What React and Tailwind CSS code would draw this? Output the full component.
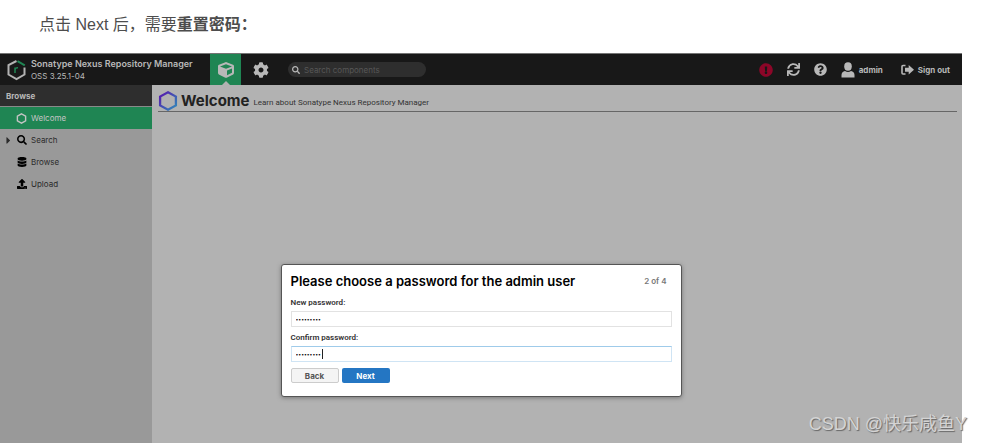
import React from 'react';
import {
  FaCaretRight,
  FaCog,
  FaCube,
  FaDatabase,
  FaExclamationCircle,
  FaQuestionCircle,
  FaSearch,
  FaSync,
  FaUpload,
} from 'react-icons/fa';

const menuItems = [
  { label: 'Search', icon: FaSearch, expandable: true },
  { label: 'Browse', icon: FaDatabase },
  { label: 'Upload', icon: FaUpload },
];

function Logo() {
  return (
    <svg className="w-5 h-[22px]" viewBox="0 0 20 22" fill="none" strokeWidth="2">
      <path d="M9.5 2 1.500 6.200v9.300L9.500 20l8-4.500V8.500" stroke="#b2b2b2" />
      <path d="M10.500 2.200 17.800 6.400" stroke="#1f8553" />
      <path d="M8 14V8.500M8 10.500c.3-1.300 1.300-2 3-1.800" stroke="#1f8553" strokeWidth="1.500" />
    </svg>
  );
}

function Hexagon() {
  return (
    <svg className="w-5 h-5" viewBox="0 0 20 20" fill="none">
      <defs>
        <linearGradient id="hexagon" x1="0" y1="0" x2="1" y2="1">
          <stop offset="0.1" stopColor="#5420ae" />
          <stop offset="0.9" stopColor="#3480b8" />
        </linearGradient>
      </defs>
      <path d="M10 1.300 17.900 5.600v8.800L10 18.700l-7.900-4.300V5.600z" stroke="url(#hexagon)" strokeWidth="2.300" />
    </svg>
  );
}

function UserIcon() {
  return (
    <svg className="w-[14px] h-4" viewBox="0 0 14 16" fill="currentColor">
      <ellipse cx="7" cy="4.500" rx="3.800" ry="4.200" />
      <path d="M.5 15.500v-2.500C.5 10.800 2 9.500 4 9c2 1.200 4 1.200 6 0 2 .5 3.500 1.800 3.500 4v2.500z" />
    </svg>
  );
}

function SignOutIcon() {
  return (
    <svg className="w-[13px] h-3" viewBox="0 0 13 12">
      <path d="M4.500 1.500H2a1 1 0 0 0-1 1v6.500a1 1 0 0 0 1 1h2.500" fill="none" stroke="currentColor" strokeWidth="1.600" />
      <path d="M7.700 1 13 5.700l-5.300 4.700V7.700H4V3.700h3.700z" fill="currentColor" />
    </svg>
  );
}

function Header() {
  return (
    <header className="h-8 bg-[#181818] border-t border-[#747474] flex items-center text-[#b8b8b8]">
      <div className="w-[210px] shrink-0 flex items-center gap-1 pl-[7px]">
        <Logo />
        <div className="whitespace-nowrap">
          <p className="text-[9px] leading-3 font-semibold">Sonatype Nexus Repository Manager</p>
          <p className="text-[8px] leading-3">OSS 3.25.1-04</p>
        </div>
      </div>
      <button type="button" aria-label="Browse server contents" className="relative w-[31px] h-full bg-[#1f8553] flex items-center justify-center">
        <FaCube className="w-4 h-4" />
        <span className="absolute bottom-0 border-x-4 border-b-4 border-x-transparent border-b-[#b2b2b2]" />
      </button>
      <button type="button" aria-label="Administration" className="w-10 flex justify-center">
        <FaCog className="w-4 h-4" />
      </button>
      <label className="ml-[7px] w-[138px] h-[15px] px-1 rounded-full bg-[#2e2e2e] flex items-center gap-1">
        <FaSearch className="w-2 h-2 shrink-0" />
        <input
          type="search"
          aria-label="Search components"
          placeholder="Search components"
          className="min-w-0 flex-1 bg-transparent text-[8px] leading-3 outline-none placeholder:text-[#575757]"
        />
      </label>
      <div className="ml-auto pr-3 flex items-center gap-[14px] text-[8px] font-bold">
        <button type="button" aria-label="System status">
          <FaExclamationCircle className="w-[14px] h-[14px] text-[#8c0628]" />
        </button>
        <button type="button" aria-label="Refresh">
          <FaSync className="w-[13px] h-[13px]" />
        </button>
        <button type="button" aria-label="Help">
          <FaQuestionCircle className="w-[13px] h-[13px]" />
        </button>
        <button type="button" className="flex items-center gap-1">
          <UserIcon />
          admin
        </button>
        <button type="button" className="ml-1 flex items-center gap-1">
          <SignOutIcon />
          Sign out
        </button>
      </div>
    </header>
  );
}

function Sidebar() {
  return (
    <nav className="w-[152px] shrink-0 bg-[#999999] text-[8px]">
      <h2 className="h-[22px] px-[6px] flex items-center bg-[#2e2e2e] border-b border-[#8a8a8a] font-bold text-[#b8b8b8]">
        Browse
      </h2>
      <a href="#welcome" className="h-[22px] pl-4 flex items-center gap-1 bg-[#1f8553] text-[#c4c4c4]">
        <svg className="w-[11px] h-[11px]" viewBox="0 0 20 20" fill="none" stroke="currentColor" strokeWidth="2.500">
          <path d="M10 1.500 17.500 5.700v8.600L10 18.500l-7.500-4.200V5.700z" />
        </svg>
        Welcome
      </a>
      {menuItems.map(({ label, icon: Icon, expandable }) => (
        <a key={label} href={`#${label.toLowerCase()}`} className="h-[22px] pl-1 flex items-center gap-1 text-[#2b2b2b]">
          <span className="w-[9px] shrink-0">{expandable && <FaCaretRight className="w-[9px] h-[11px]" />}</span>
          <Icon className="w-[10px] h-[10px] text-black" />
          {label}
        </a>
      ))}
    </nav>
  );
}

function PasswordField({ id, label, focused }) {
  return (
    <div className="flex flex-col gap-[2px]">
      <label htmlFor={id} className="text-[8px] leading-3 font-semibold text-[#333333] font-['Roboto',sans-serif]">
        {label}
      </label>
      <div className="relative">
        <input
          id={id}
          type="password"
          defaultValue="•••••••••"
          className={`block w-full h-4 px-1 border bg-white text-[5px] text-black outline-none caret-transparent ${
            focused ? 'border-[#cfe4f4] border-t-[#9fcbea]' : 'border-[#e2e2e2]'
          }`}
        />
        {/* Text cursor */}
        {focused && <span className="absolute left-[31px] top-[3px] w-px h-[10px] bg-[#222222]" />}
      </div>
    </div>
  );
}

function PasswordDialog() {
  return (
    <form role="dialog" aria-labelledby="dialog-title" className="w-[401px] h-[133px] px-[9px] pt-2 bg-white border border-[#555555] rounded-[3px] shadow-[0_1px_4px_#777777]">
      <div className="flex items-center justify-between pr-[5px]">
        <h2 id="dialog-title" className="text-[13px] leading-4 font-semibold text-black">
          Please choose a password for the admin user
        </h2>
        <span className="text-[8px] font-semibold text-[#777777]">2 of 4</span>
      </div>
      <div className="mt-2 flex flex-col gap-[5px]">
        <PasswordField id="new-password" label="New password:" />
        <PasswordField id="confirm-password" label="Confirm password:" focused />
      </div>
      <div className="mt-[6px] flex gap-[3px] text-[8px] font-bold">
        <button type="button" className="w-12 h-[15px] rounded-[2px] border border-[#cccccc] bg-[#f4f4f4] text-[#555555] flex items-center justify-center">
          Back
        </button>
        <button type="button" className="w-12 h-[15px] rounded-[2px] bg-[#2476c3] text-white flex items-center justify-center">
          Next
        </button>
      </div>
    </form>
  );
}

export default function App() {
  return (
    <div className="min-h-screen flex flex-col bg-white font-['Inter',sans-serif]">
      <p className="h-[53px] pl-[39px] pt-[13px] text-base leading-6 text-[#4d4d4d] font-['Liberation_Sans','Noto_Sans_CJK_SC',sans-serif]">
        点击 Next 后，需要<strong>重置密码：</strong>
      </p>
      <div className="relative flex-1 flex flex-col mr-[21px]">
        <Header />
        <div className="flex-1 flex">
          <Sidebar />
          <main className="flex-1 pl-[6px] pr-[5px] pt-[6px] bg-[#b2b2b2]">
            <div className="flex items-center border-b border-[#666666]">
              <Hexagon />
              <h1 className="ml-[3px] text-[15px] leading-5 font-bold text-[#222222]">Welcome</h1>
              <p className="ml-1 pt-1 text-[8px] leading-4 text-[#333333] font-['Roboto',sans-serif]">
                Learn about Sonatype Nexus Repository Manager
              </p>
            </div>
          </main>
        </div>
        <div className="absolute inset-x-0 top-[211px] flex justify-center">
          <PasswordDialog />
        </div>
      </div>
      <p className="absolute right-4 bottom-[7px] text-[18px] leading-6 text-[#d4d4d4] [text-shadow:1px_1px_1px_#666666] font-['Liberation_Sans','Noto_Sans_CJK_SC',sans-serif]">
        CSDN @快乐咸鱼Y
      </p>
    </div>
  );
}
